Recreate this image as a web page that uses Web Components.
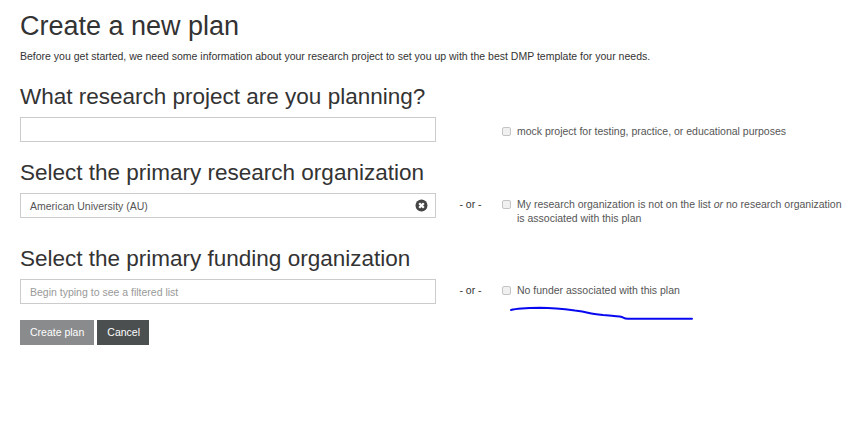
<!DOCTYPE html>
<html>
<head>
<meta charset="utf-8">
<style>
  html, body { margin: 0; background: #fff; }
  body { font-family: 'Liberation Sans', Arial, sans-serif; color: #333; }
</style>
</head>
<body>
<plan-page>
  <h1 slot="title">Create a new plan</h1>
  <span slot="intro">Before you get started, we need some information about your research project to set you up with the best DMP template for your needs.</span>

  <plan-section heading="What research project are you planning?" style="--section-top:3px;--option-top:7px">
    <text-box></text-box>
    <check-option slot="option">mock project for testing, practice, or educational purposes</check-option>
  </plan-section>

  <plan-section heading="Select the primary research organization" or style="--section-top:1px">
    <text-box value="American University (AU)" clearable></text-box>
    <check-option slot="option">My research organization is not on the list <em>or</em> no research organization is associated with this plan</check-option>
  </plan-section>

  <plan-section heading="Select the primary funding organization" or style="--section-top:4px">
    <text-box placeholder="Begin typing to see a filtered list"></text-box>
    <check-option slot="option">No funder associated with this plan</check-option>
  </plan-section>

  <div slot="actions">
    <plan-button tone="light">Create plan</plan-button>
    <plan-button tone="dark">Cancel</plan-button>
  </div>
</plan-page>

<script>
const FONT = `'Liberation Sans', Arial, sans-serif`;

class PlanPage extends HTMLElement {
  connectedCallback() {
    this.attachShadow({ mode: 'open' }).innerHTML = `
      <style>
        :host { display: block; position: relative; height: 437px; overflow: hidden; padding: 0 0 0 20px; box-sizing: border-box; font-family: ${FONT}; }
        ::slotted(h1) { margin: 0; padding-top: 9px; font-size: 27px; line-height: 34px; font-weight: 400; color: #333; }
        .intro { margin-top: 5px; font-size: 10.5px; line-height: 16px; color: #333; }
        .actions { margin-top: 16px; }
        ::slotted([slot=actions]) { display: flex; gap: 3px; }
        /* the hand-drawn mark on top of the screenshot */
        .mark { position: absolute; left: 505px; top: 302px; }
      </style>
      <slot name="title"></slot>
      <div class="intro"><slot name="intro"></slot></div>
      <slot></slot>
      <div class="actions"><slot name="actions"></slot></div>
      <svg class="mark" width="195" height="24" viewBox="0 0 195 24" fill="none">
        <path d="M6 8 C12 6.4 22 6 35 5.8 C48 5.9 58 7 70 8.6 C76 9.2 80 10 84 11 C88 12 92 12.4 98 13 C106 13.6 113 14 117 15 C119 16 120 16.7 123 16.8 L187 16.8" stroke="#0808f0" stroke-width="2" stroke-linecap="round"/>
      </svg>`;
  }
}

class PlanSection extends HTMLElement {
  connectedCallback() {
    const heading = this.getAttribute('heading');
    const or = this.hasAttribute('or');
    this.attachShadow({ mode: 'open' }).innerHTML = `
      <style>
        :host { display: block; margin-top: var(--section-top, 0); font-family: ${FONT}; }
        h2 { margin: 0; padding-top: 15px; font-size: 22.5px; line-height: 29px; font-weight: 400; color: #333; }
        .row { display: grid; grid-template-columns: 416px 64px 1fr; margin-top: 6px; align-items: start; }
        .or { text-align: center; padding-left: 5px; font-size: 10.5px; line-height: 23px; color: #333; }
      </style>
      <h2>${heading}</h2>
      <div class="row">
        <slot></slot>
        <div class="or">${or ? '- or -' : ''}</div>
        <slot name="option"></slot>
      </div>`;
  }
}

class TextBox extends HTMLElement {
  connectedCallback() {
    const value = this.getAttribute('value') || '';
    const placeholder = this.getAttribute('placeholder') || '';
    const clear = this.hasAttribute('clearable') ? `
      <svg class="clear" width="13" height="13" viewBox="0 0 13 13">
        <circle cx="6.5" cy="6.5" r="6" fill="#444"/>
        <path d="M4.2 4.2 L8.8 8.8 M8.8 4.2 L4.2 8.8" stroke="#fff" stroke-width="2.3"/>
      </svg>` : '';
    this.attachShadow({ mode: 'open' }).innerHTML = `
      <style>
        :host { display: flex; align-items: center; justify-content: space-between; box-sizing: border-box; width: 416px; height: 25px; padding: 0 7px 0 9px; border: 1px solid #ccc; background: #fff; font-family: ${FONT}; font-size: 10.5px; color: #555; }
        .ph { color: #999; }
        .clear { display: block; }
      </style>
      <span class="${value ? '' : 'ph'}">${value || placeholder}</span>${clear}`;
  }
}

class CheckOption extends HTMLElement {
  connectedCallback() {
    this.attachShadow({ mode: 'open' }).innerHTML = `
      <style>
        :host { display: flex; align-items: flex-start; gap: 6px; width: 345px; font-family: ${FONT}; font-size: 10.5px; line-height: 14px; color: #555; padding-top: var(--option-top, 4px); }
        input { appearance: none; -webkit-appearance: none; flex: none; box-sizing: border-box; width: 9px; height: 9px; margin: 3px 0 0 2px; border: 1px solid #c4c4c4; border-radius: 2px; background: #f0f0f0; }
      </style>
      <input type="checkbox"><span><slot></slot></span>`;
  }
}

class PlanButton extends HTMLElement {
  connectedCallback() {
    this.attachShadow({ mode: 'open' }).innerHTML = `
      <style>
        :host { display: block; font-family: ${FONT}; font-size: 10.5px; line-height: 25px; height: 25px; padding: 0 10px; color: #fff; }
        :host([tone=light]) { background: #898b8c; }
        :host([tone=dark]) { background: #4b4f50; padding-right: 9.5px; }
      </style>
      <slot></slot>`;
  }
}

customElements.define('plan-page', PlanPage);
customElements.define('plan-section', PlanSection);
customElements.define('text-box', TextBox);
customElements.define('check-option', CheckOption);
customElements.define('plan-button', PlanButton);
</script>
</body>
</html>
